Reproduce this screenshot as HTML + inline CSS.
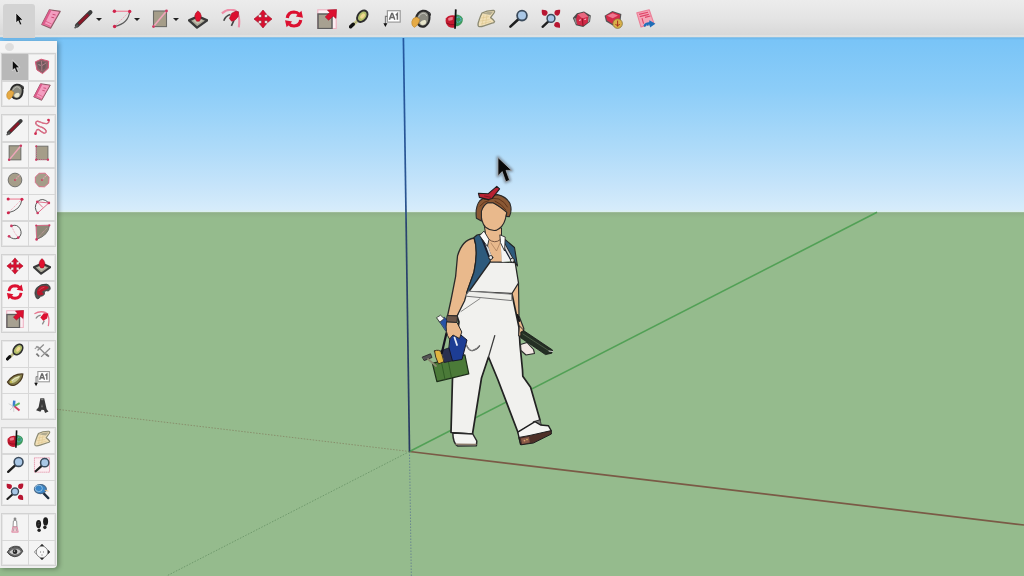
<!DOCTYPE html>
<html><head><meta charset="utf-8">
<style>
html,body{margin:0;padding:0;width:1024px;height:576px;overflow:hidden;font-family:"Liberation Sans",sans-serif;background:#95bb8d;}
.a{position:absolute;}
svg{position:absolute;overflow:visible;}
#sky{left:0;top:37px;width:1024px;height:175px;background:linear-gradient(#9ac8e4 0px,#70baee 1.5px,#79c4f7 3px,#8ccdf8 30%,#acdaf9 62%,#c6e4fa 85%,#d6ecfb 98.5%,#dcefef);}
#ground{left:0;top:212px;width:1024px;height:364px;background:linear-gradient(#a8c4a4 0px,#8fb088 1.2px,#92b58a 3px,#95bb8d 6px,#95bb8d);}
#tb{left:0;top:0;width:1024px;height:37px;background:linear-gradient(#ececec,#e4e4e4 50%,#d7d7d7);}
#tbl{left:0;top:34.5px;width:1024px;height:2.5px;background:#dfe1e1;}
#sel{left:3px;top:4px;width:32px;height:34px;background:#d3d3d3;border-radius:3px 3px 0 0;}
#pal{left:0;top:41px;width:56.5px;height:527px;background:#eeeeee;border-radius:0 0 4px 0;box-shadow:2px 1px 5px rgba(0,0,0,.32);}
#paltitle{left:0;top:41px;width:56.5px;height:11px;background:#f4f4f4;}
#palbtn{left:4.5px;top:43px;width:9px;height:8px;border-radius:50%;background:#dedede;}
.grp{position:absolute;left:1px;width:54.5px;box-sizing:border-box;border:1px solid #d2d2d2;background:#f4f4f4;box-shadow:inset 0 0 0 1px #e6e6e6;}
.vl{position:absolute;left:25.8px;top:0;bottom:0;width:1.6px;background:#d8d8d8;}
.hl{position:absolute;left:0;right:0;height:1.6px;background:#d8d8d8;}
.pc{position:absolute;left:0;width:26px;height:26px;}
.selc{position:absolute;background:#b8b8b8;}
.drop{position:absolute;top:17.5px;width:0;height:0;border-left:3px solid transparent;border-right:3px solid transparent;border-top:3px solid #222;}
</style></head><body>
<svg width="0" height="0" style="position:absolute"><defs>
<symbol id="i-select" viewBox="0 0 20 20"><path d="M7 4L7 13.8L9.2 11.8L11 16L12.8 15.3L11 11.2L13.9 10.9Z" fill="#0d0d0d" stroke="#fafafa" stroke-width="1" stroke-opacity=".55" stroke-linejoin="round"/></symbol>
<symbol id="i-eraser" viewBox="0 0 20 20"><path d="M8.4 0.8L19.2 2.4L9.6 19.2L0.8 15.4Z" fill="#ee7aa5" stroke="#8e5a66" stroke-width="1.1" stroke-linejoin="round"/><path d="M8.8 1.6L17.8 3L9.6 17L2.6 14.2Z" fill="#f39ec0"/><path d="M0.8 15.4L8.4 0.8L10.4 1.4L3 16.2Z" fill="#dc5a8a"/><path d="M3.4 14.6L9.2 17.4M5 12.4L10.6 15" stroke="#e0608c" stroke-width=".9"/><path d="M11.6 5.4L14.6 6M10.4 8.2L13.2 8.8" stroke="#c84a74" stroke-width="1"/></symbol>
<symbol id="i-pencil" viewBox="0 0 20 20"><path d="M3 16.5L16.4 3.3" stroke="#3c3c3c" stroke-width="4.2" stroke-linecap="round"/><path d="M4.8 14.8L14.2 5.5" stroke="#8a1828" stroke-width="2.8"/><path d="M1.2 18.6L3.4 16.4" stroke="#5a5a5a" stroke-width="1.8" stroke-linecap="round"/></symbol>
<symbol id="i-arc" viewBox="0 0 20 20"><path d="M2.5 2.3H17.7" stroke="#ef8ea2" stroke-width="1.4"/><path d="M17.5 2.6L2.7 17.3" stroke="#f0a8b8" stroke-width="1" stroke-dasharray="1.6 1"/><path d="M17.7 2.4Q16.5 14.5 2.6 17.5" stroke="#5c5c5c" stroke-width="1.1" fill="none"/><circle cx="2.4" cy="2.3" r="1.7" fill="#d0244c"/><circle cx="17.7" cy="2.4" r="1.7" fill="#d0244c"/><circle cx="2.6" cy="17.5" r="1.7" fill="#d0244c"/></symbol>
<symbol id="i-rect" viewBox="0 0 20 20"><rect x="3.5" y="2" width="13" height="15.6" fill="#a59d89" stroke="#6a6a66" stroke-width="1.1"/><path d="M3.5 17.6L16.5 2" stroke="#f0a6bb" stroke-width="1.6"/><circle cx="3.5" cy="17.6" r="1.4" fill="#cc3a62"/><circle cx="16.5" cy="2" r="1.4" fill="#cc3a62"/></symbol>
<symbol id="i-push" viewBox="0 0 20 20"><path d="M1 11.4L10 7.2L19.2 11.4L9 18.6Z" fill="#a9a798" stroke="#3a3a3a" stroke-width="2.3" stroke-linejoin="round"/><path d="M5 11.6L10 9.4L15 11.6L9.4 15Z" fill="#c6c4b2"/><path d="M10 1.8Q12.6 3.6 13.2 6.6Q13.4 9.6 11.4 12.2L8.6 12.2Q6.6 9.6 6.8 6.6Q7.4 3.6 10 1.8Z" fill="#e1112f" stroke="#8a0a1e" stroke-width=".5"/></symbol>
<symbol id="i-follow" viewBox="0 0 20 20"><path d="M0.9 4.4Q7.6 -1.4 14.6 1.8Q19.6 5.4 17.8 18.4" stroke="#ef8ca6" stroke-width="2.1" fill="none"/><path d="M2.8 11.8Q4.4 7 9.4 5.6" stroke="#454545" stroke-width="1.6" fill="none"/><path d="M12.8 11.6L10.4 16.8" stroke="#454545" stroke-width="1.6"/><path d="M8.4 9.4L10.8 4.2L15 2.2L17.6 2.8L17.2 7.6L14 11.2L10.6 12.2Z" fill="#dc0f30" stroke="#9b0c22" stroke-width=".6"/></symbol>
<symbol id="i-move" viewBox="0 0 20 20"><path d="M10 1L13.6 5.4L11.4 5.4L11.4 8.6L14.6 8.6L14.6 6.4L19 10L14.6 13.6L14.6 11.4L11.4 11.4L11.4 14.6L13.6 14.6L10 19L6.4 14.6L8.6 14.6L8.6 11.4L5.4 11.4L5.4 13.6L1 10L5.4 6.4L5.4 8.6L8.6 8.6L8.6 5.4L6.4 5.4Z" fill="#dc1030" stroke="#9a0a20" stroke-width=".6" stroke-linejoin="round"/></symbol>
<symbol id="i-rotate" viewBox="0 0 20 20"><path d="M3.3 9Q4 3.2 10 3Q13.2 3 14.8 5" stroke="#dc1030" stroke-width="3.2" fill="none"/><path d="M11.8 7.5L19 8.8L17.4 1.8Z" fill="#dc1030"/><path d="M16.7 11Q16 16.8 10 17Q6.8 17 5.2 15" stroke="#dc1030" stroke-width="3.2" fill="none"/><path d="M8.2 12.5L1 11.2L2.6 18.2Z" fill="#dc1030"/></symbol>
<symbol id="i-scale" viewBox="0 0 20 20"><rect x="0.8" y="0.8" width="18.4" height="18.8" fill="#fbeef2" stroke="#eeb0c0" stroke-width="1.1"/><rect x="1" y="5" width="14" height="14.6" fill="#a7a191" stroke="#5e5e5e" stroke-width="1.5"/><path d="M19.6 0.4L19 9.4L16.2 7.2L11.6 11.2L8.2 8L12.6 3.6L10.4 1Z" fill="#dc1030" stroke="#9b0c22" stroke-width=".5"/></symbol>
<symbol id="i-tape" viewBox="0 0 20 20"><path d="M3.6 16.4L9.6 10.6" stroke="#c9c88e" stroke-width="3.2"/><path d="M3.6 16.4L9.6 10.6" stroke="#555" stroke-width="0.6" stroke-dasharray="1 1"/><ellipse cx="13.3" cy="7.2" rx="4.4" ry="6.4" transform="rotate(38 13.3 7.2)" fill="#b3bf6a" stroke="#2e2e2e" stroke-width="1.9"/><ellipse cx="13.6" cy="7" rx="1.8" ry="3" transform="rotate(38 13.6 7)" fill="#f0d890"/><path d="M1.6 17.8L4.2 15.2" stroke="#111" stroke-width="3.4" stroke-linecap="round"/></symbol>
<symbol id="i-text" viewBox="0 0 20 20"><rect x="5.4" y="1.7" width="12.8" height="11.4" fill="#fff" stroke="#9a9a9a" stroke-width="1.2"/><path d="M7.4 10.8L9.7 4.4H10.5L12.8 10.8M8.4 8.6H11.8" stroke="#6a6a6a" stroke-width="1.5" fill="none"/><path d="M13.8 6.2L15.4 4.6V10.8" stroke="#6a6a6a" stroke-width="1.5" fill="none"/><path d="M5.4 7.4H3.4V15" stroke="#7a7a7a" stroke-width="1.1" fill="none"/><path d="M1.4 14.2L5.4 14.2L3.4 18Z" fill="#111"/></symbol>
<symbol id="i-paint" viewBox="0 0 20 20"><path d="M5 9Q6.6 2.8 11.6 1.8Q16.8 1.2 18.2 5.8Q19.6 13.2 14.4 17Q9.8 19.2 6.6 14.6Z" fill="#8a8a80" stroke="#2a2a2a" stroke-width="2"/><path d="M15.4 3.4Q19.6 2.4 19.4 6.6" stroke="#3a3a3a" stroke-width="1.3" fill="none"/><path d="M7.6 8Q9 4.8 12 4.2Q15 4 15.8 7" stroke="#c0c0b8" stroke-width="1" fill="none"/><path d="M9 13.4Q11 10.4 14.4 11Q16 12.6 14.6 15Q12 16.6 9.8 15.6Z" fill="#e8e6cc"/><path d="M0.8 12.6Q1.6 8.4 5.8 8L8.8 10.2Q7.8 16.4 3.2 18.4Q0.2 16.6 0.8 12.6Z" fill="#e6aa44" stroke="#b07a20" stroke-width=".5"/></symbol>
<symbol id="i-orbit" viewBox="0 0 20 20"><path d="M11 6.6Q5 5.4 1.8 9.6Q0.8 14.8 4.6 17.8Q8.4 19.8 11 18Z" fill="#c41a30"/><path d="M4 9.4Q6.4 7.8 9 8.2L8.6 11Q6 11.8 4.4 11.6Z" fill="#e87a88"/><path d="M2.4 14Q6 16.4 11 15.6" stroke="#8a1020" stroke-width="1" fill="none"/><path d="M11 5.6Q16.8 5.4 18.8 9.6Q19.4 15.4 13.6 17.2L11 17.2Z" fill="#3f9a5c"/><circle cx="14.4" cy="10.6" r="2.6" fill="none" stroke="#58b8e0" stroke-width="1.1" stroke-dasharray="1.2 .8"/><path d="M11.8 0.4L11 19.8" stroke="#111" stroke-width="1.8"/></symbol>
<symbol id="i-pan" viewBox="0 0 20 20"><path d="M6 4Q11 1.2 17.6 1.4Q19.2 2 18.2 3.6L14.6 8.6Q17.2 10.4 18.6 12.6Q18.2 14 16 14.2L8 16.8Q4 18.2 2.4 17.2Q1.4 15.8 2.8 12Q4.4 7 6 4Z" fill="#f1e0b8" stroke="#8c8a72" stroke-width="1.3" stroke-linejoin="round"/><path d="M6.4 4.6Q11.4 2.4 17.4 2.4L14.4 6Q10 5.6 6.4 4.6Z" fill="#b0aa90"/><path d="M5 9L13 7.6M4.2 12L13.6 10.6M5 15L15 12.4M8 5.6L6 15.6M11 6L9.6 15" stroke="#e0c890" stroke-width=".7"/></symbol>
<symbol id="i-zoom" viewBox="0 0 20 20"><path d="M2.4 17.6L10.4 10.2" stroke="#1e1e1e" stroke-width="2.6" stroke-linecap="round"/><circle cx="14" cy="6.6" r="4.9" fill="#a9c7e6" stroke="#3b4b5c" stroke-width="1.8"/></symbol>
<symbol id="i-zoomext" viewBox="0 0 20 20"><path d="M1.6 17.8L7.4 12.4" stroke="#1e1e1e" stroke-width="2.3" stroke-linecap="round"/><circle cx="10" cy="9.4" r="3.9" fill="#a9c7e6" stroke="#3b4b5c" stroke-width="1.5"/><path d="M0.8 0.8Q5.6 0.6 6.6 3Q7 5 5.2 6.4Q2.8 7.2 1.2 5.4Q0.4 3.4 0.8 0.8Z" fill="#b81632"/><path d="M19.2 0.8Q19.4 5.6 17 6.6Q15 7 13.6 5.2Q12.8 2.8 14.6 1.2Q16.6 0.4 19.2 0.8Z" fill="#b81632"/><path d="M19 18.8Q14.2 19 13.2 16.6Q12.8 14.6 14.6 13.2Q17 12.4 18.6 14.2Q19.4 16.2 19 18.8Z" fill="#b81632"/></symbol>
<symbol id="i-wh3d" viewBox="0 0 20 20"><path d="M0.8 9L5 4.2L12 2.4L18.8 6.4L18 12.8L11.2 18L4 16.2Z" fill="#4a4a4a"/><path d="M1.8 8.8L4.2 9.6L5 15.4L3.6 14.6Z" fill="#8a8a8a"/><path d="M16.4 7.4L18 7L17.4 12.6L15.8 13.6Z" fill="#9a9a9a"/><path d="M4.2 9.6L5.6 5.2L12 3.4L16.4 7.4L15.8 13.6L11 17L5 15.4Z" fill="#d02a48"/><path d="M5.6 5.2L12 3.4L16.4 7.4L10.4 9.4Z" fill="#e86880"/><path d="M10.4 9.4L11 17" stroke="#8a1020" stroke-width=".9"/><path d="M7 11.4L9 10.8M12.4 10.6L14.2 10" stroke="#f8d0d8" stroke-width="1"/></symbol>
<symbol id="i-extwh" viewBox="0 0 20 20"><path d="M0.6 6.8L8.4 2L17.4 5L16.4 12.6L8.8 16.6L2 12.4Z" fill="#555"/><path d="M1.8 6.8L8.6 3L16.2 5.8L15.4 11.8L8.8 15L3 11.4Z" fill="#d42a48"/><path d="M3 6.8L8.6 4.2L14 6.4L8.8 9.2Z" fill="#ef7890"/><circle cx="13.6" cy="14.6" r="4.8" fill="#d8b04a" stroke="#7a6a30" stroke-width=".7"/><path d="M13.6 11.6V17.6M11.4 15.4Q13.6 17.8 15.8 15.4" stroke="#a8301c" stroke-width="1" fill="none"/></symbol>
<symbol id="i-layout" viewBox="0 0 20 20"><path d="M0.8 3.9L13.2 0.8L17.9 14.4L5 18Z" fill="#f4a6b8" stroke="#ec8098" stroke-width="1.1" stroke-linejoin="round"/><path d="M3 5.4L12 3.2M3.8 7.6L12.8 5.4M6 9.2L7.6 14.6M9 8.4L14.4 7" stroke="#e04468" stroke-width="1.1"/><path d="M7.4 16.4Q9.4 13 13.2 13.2L13.4 11.2L19.4 14.8L14 18.6L13.8 16.4Q10.8 16 8.6 18Z" fill="#1e6eb8"/><path d="M10 16.4L11 16.2M12.4 16L13.4 16" stroke="#8ac0f0" stroke-width=".8"/></symbol>
<symbol id="i-lasso" viewBox="0 0 20 20"><path d="M2.6 5.4L9 2.4L17.4 4.6L17 12.6L10.6 18.4L4.4 14.4Z" fill="#8c626a" stroke="#d85878" stroke-width="1.1" stroke-linejoin="round"/><path d="M4.6 6.4L9.4 4.6L14.6 6.6L13.6 12.4L9.8 15.4L6.2 12.6Z" fill="#6e5a5e"/><path d="M9.4 4.6L9.8 9.6L14.6 6.6M9.8 9.6L9.8 15.4" stroke="#c88a98" stroke-width=".8" fill="none"/><path d="M6 8.4L8.6 9.4" stroke="#b0a0a4" stroke-width="1"/></symbol>
<symbol id="i-freehand" viewBox="0 0 20 20"><path d="M17.2 2.2Q19 4.6 15.4 6.2Q11.4 6.4 7.4 4.2Q3.4 2.6 3 5.6Q3.2 8 7.6 9.6Q13.2 11.2 14.6 14.4Q14.6 17.4 11.6 16.6Q8.4 14.8 6.2 12.8Q3.6 12.4 3.2 16.2L2.8 17.6" stroke="#c8405e" stroke-width="1.5" fill="none"/><path d="M17.2 2.2Q19 4.6 15.4 6.2Q11.4 6.4 7.4 4.2Q3.4 2.6 3 5.6Q3.2 8 7.6 9.6Q13.2 11.2 14.6 14.4Q14.6 17.4 11.6 16.6Q8.4 14.8 6.2 12.8Q3.6 12.4 3.2 16.2" stroke="#f0b0c0" stroke-width=".5" fill="none"/><circle cx="17.2" cy="2.2" r="1.5" fill="#d02a50"/><circle cx="2.8" cy="17.4" r="1.5" fill="#d02a50"/></symbol>
<symbol id="i-rotrect" viewBox="0 0 20 20"><rect x="3.6" y="2.4" width="13" height="15" fill="#a59d89" stroke="#6a6a66" stroke-width="1"/><path d="M3.6 2.4V17.4H16.6" stroke="#e27c96" stroke-width="1" stroke-dasharray="1.4 1" fill="none"/><circle cx="3.6" cy="17.4" r="1.3" fill="#cc3a62"/><circle cx="16.6" cy="17.4" r="1.3" fill="#cc3a62"/><circle cx="3.6" cy="2.4" r="1.1" fill="#cc3a62"/></symbol>
<symbol id="i-circle" viewBox="0 0 20 20"><circle cx="10" cy="10" r="7.6" fill="#a59d89" stroke="#6a6a66" stroke-width="1"/><path d="M10 10L15.2 4.6" stroke="#eaa0b4" stroke-width="1.2" stroke-dasharray="1.4 .8"/><circle cx="10" cy="10" r="1" fill="#cc3a62"/></symbol>
<symbol id="i-polygon" viewBox="0 0 20 20"><path d="M6.8 2.6L13.6 2.4L17.8 7L17.4 13.6L12.8 17.6L6.6 17.4L2.6 12.8L2.6 6.6Z" fill="#a59d89" stroke="#d86a86" stroke-width="1"/><path d="M10 10L16 3.8" stroke="#eaa0b4" stroke-width="1.2" stroke-dasharray="1.4 .8"/><circle cx="10" cy="10" r="1" fill="#cc3a62"/></symbol>
<symbol id="i-arc3" viewBox="0 0 20 20"><path d="M4.8 5.4Q10.6 -0.4 17.6 6.6" stroke="#555" stroke-width="1.1" fill="none"/><path d="M4.8 5.4Q0.2 11.6 5.2 17.8" stroke="#555" stroke-width="1.1" fill="none"/><path d="M4.8 5.4L17.6 6.6L5.2 17.8M4.8 5.4L11 11.6" stroke="#e0708c" stroke-width="1.1" fill="none"/><circle cx="4.8" cy="5.4" r="1.5" fill="#cc3a62"/><circle cx="17.6" cy="6.6" r="1.5" fill="#cc3a62"/><circle cx="5.2" cy="17.8" r="1.5" fill="#cc3a62"/></symbol>
<symbol id="i-arcc" viewBox="0 0 20 20"><path d="M6 3.2Q12.4 0.8 15.6 6.4Q18.8 12.6 13.6 16.6Q8.6 19.2 3.4 14.8" stroke="#555" stroke-width="1.1" fill="none"/><path d="M6 3.2L9.4 10.4L13.6 16.2" stroke="#eaa0b4" stroke-width="1" stroke-dasharray="1.2 .8" fill="none"/><circle cx="6" cy="3.2" r="1.5" fill="#cc3a62"/><circle cx="3.4" cy="14.8" r="1.5" fill="#cc3a62"/><circle cx="13.6" cy="16.2" r="1.5" fill="#cc3a62"/></symbol>
<symbol id="i-pie" viewBox="0 0 20 20"><path d="M3.6 2.8L18.2 2.6Q17.6 13.4 4 18.2Z" fill="#8f8878" stroke="#6a6a66" stroke-width="1"/><path d="M3.6 2.8L18.2 2.6M3.6 2.8L4 18.2" stroke="#e0708c" stroke-width="1" fill="none"/><path d="M3.6 18.4L15 6" stroke="#d8a0b0" stroke-width="1" stroke-dasharray="1 1"/><circle cx="3.6" cy="2.8" r="1.2" fill="#cc3a62"/><circle cx="18.2" cy="2.6" r="1.2" fill="#cc3a62"/><circle cx="4" cy="18.2" r="1.4" fill="#cc3a62"/></symbol>
<symbol id="i-offset" viewBox="0 0 20 20"><path d="M1.6 4.2Q8 0.4 14.4 3Q19.2 6.4 17 18" stroke="#e87890" stroke-width="1.4" fill="none"/><path d="M3.2 9.4Q5 6 8.6 5.6" stroke="#8a8a8a" stroke-width="1.4" fill="none"/><path d="M12.6 11.8L10.4 16" stroke="#8a8a8a" stroke-width="1.4"/><path d="M8.2 8.2L12 3.6L17 4L15.6 9.4L11.4 12Z" fill="#dc1030"/></symbol>
<symbol id="i-dim" viewBox="0 0 20 20"><path d="M5 8.4L12 1.6M9 15.4L19 5.8M5.6 4.2L15.6 14.2" stroke="#8e8e8e" stroke-width="1.4" fill="none"/><path d="M2 6.6L5.4 3.6M3.4 3.4L6.4 6" stroke="#999" stroke-width="1.2"/><path d="M14.6 12L17.6 15.2" stroke="#777" stroke-width="2"/><path d="M3.8 11.8L6.8 15" stroke="#777" stroke-width="2"/></symbol>
<symbol id="i-prot" viewBox="0 0 20 20"><path d="M1.6 13.4Q8 4 18.8 4.4Q18 13 9.6 16.8Q4.4 18.4 1.6 13.4Z" fill="#857f4a" stroke="#4a3a20" stroke-width="1.3"/><path d="M4.4 13Q9 7.2 16 6.4Q14 11.6 9.2 14Q6 15.2 4.4 13Z" fill="#c8c890"/><path d="M6 12.4Q10 8.6 14.6 7.4" stroke="#f0f0d0" stroke-width="1" fill="none"/><circle cx="5.6" cy="13.2" r="1.2" fill="#c8c050"/></symbol>
<symbol id="i-axes" viewBox="0 0 20 20"><path d="M9.2 5.2L8.6 12" stroke="#3a7ed0" stroke-width="2.8"/><path d="M9.6 11L15.2 8" stroke="#60b860" stroke-width="2.2"/><path d="M9.6 11.6L15 16" stroke="#d04060" stroke-width="2.2"/><path d="M8.6 11.6L3 8.6M8.6 11.6L4.4 15.6M8.6 12L8.6 17.6" stroke="#c8c8c8" stroke-width=".9"/></symbol>
<symbol id="i-text3d" viewBox="0 0 20 20"><path d="M8.2 2.6L12.4 2.4L15.2 14.8L17.2 17.2L13.4 18.8L12.2 15.6L9.6 15.4L8.2 17.6L3.4 15.8L6.2 12.6Z" fill="#3a3a3a"/><path d="M8.2 2.6L12.4 2.4L11 4.8L9.4 4.8Z" fill="#777"/><path d="M10 9L10.8 12.6L9.2 12.6Z" fill="#888"/></symbol>
<symbol id="i-zoomwin" viewBox="0 0 20 20"><rect x="1.6" y="2" width="16.8" height="16" fill="#fbeef2" stroke="#e07c96" stroke-width="1" stroke-dasharray="1.2 1"/><path d="M3 17L9.6 11" stroke="#1e1e1e" stroke-width="2.4" stroke-linecap="round"/><circle cx="13" cy="7.4" r="4.6" fill="#a9c7e6" stroke="#3b4b5c" stroke-width="1.7"/></symbol>
<symbol id="i-prev" viewBox="0 0 20 20"><path d="M11.6 11.2L17 16.8" stroke="#1e2e3e" stroke-width="2.6" stroke-linecap="round"/><ellipse cx="8.2" cy="6.8" rx="6.6" ry="5" fill="#3a86c8" stroke="#4a6a8a" stroke-width="1.4"/><ellipse cx="6.4" cy="6" rx="4" ry="3.6" fill="none" stroke="#9ac4e4" stroke-width="1"/><path d="M13 8L17.2 9" stroke="#f0c080" stroke-width="1"/></symbol>
<symbol id="i-poscam" viewBox="0 0 20 20"><circle cx="10" cy="3.2" r="1.6" fill="#888"/><path d="M8.2 5.4Q10 4.4 11.8 5.4L12.2 12.2L7.8 12.2Z" fill="#fff" stroke="#8a8a8a" stroke-width="1"/><path d="M7.6 12.2L12.4 12.2L13.6 18L6.4 18Z" fill="#f4c8d2" stroke="#d87090" stroke-width=".8"/><path d="M9 13L8 17M11 13L12 17" stroke="#999" stroke-width=".8"/></symbol>
<symbol id="i-walk" viewBox="0 0 20 20"><ellipse cx="6.2" cy="9" rx="2.8" ry="4.6" fill="#1e1e1e"/><ellipse cx="6.8" cy="15.8" rx="1.9" ry="2" fill="#222"/><ellipse cx="14" cy="6" rx="2.8" ry="4.6" fill="#1e1e1e"/><ellipse cx="13.2" cy="12.6" rx="1.9" ry="2" fill="#222"/><path d="M5.4 7.6L7 7.2M5 10L7.4 9.6" stroke="#777" stroke-width=".5"/></symbol>
<symbol id="i-look" viewBox="0 0 20 20"><path d="M1.4 10.2Q6 3.2 12.6 4.2Q17.6 5 18.6 9.2Q15.2 15.4 9.2 15.2Q3.8 14.2 1.4 10.2Z" fill="#6a6a6a" stroke="#3a3a3a" stroke-width="1"/><path d="M3.4 10Q7.4 6.2 12 6.8Q15.8 7.6 16.4 9.6Q13.6 13 9.6 13Q5.6 12.6 3.4 10Z" fill="#cfcfcf"/><circle cx="10" cy="9.6" r="2.6" fill="#2a2a2a"/><circle cx="9.4" cy="9" r=".8" fill="#ddd"/><path d="M3 6.6Q9 1.8 15.8 4.6" stroke="#444" stroke-width="1" fill="none"/></symbol>
<symbol id="i-section" viewBox="0 0 20 20"><path d="M10 1.6L18.6 10L10 18.4L1.4 10Z" fill="none" stroke="#777" stroke-width=".9"/><path d="M10 1L12.4 3.6L7.6 3.6ZM19 10L16.4 12.4L16.4 7.6ZM10 19L7.6 16.4L12.4 16.4Z" fill="#1e1e1e"/><circle cx="10" cy="10" r="6.4" fill="#f8f8f8" stroke="#8a8a8a" stroke-width="1.1"/><path d="M8.4 9L8.4 11M11.6 9L11.6 11M9 13.4L11 13.4" stroke="#999" stroke-width=".9"/></symbol>
<symbol id="i-followp" viewBox="0 0 20 20"><path d="M3.6 16.6Q0.4 10.6 4 5.4Q8.6 0.6 15 1.2Q19.4 2.4 19.2 6.8L17.2 9Q14.4 7.6 12.6 10Q13.6 12.8 11.4 14Q8 14.6 7 16.6Q5.4 18.6 3.6 16.6Z" fill="#505050" stroke="#2a2a2a" stroke-width=".7"/><path d="M4.4 11.6Q4.2 6 8.6 3.6Q13 2 17.6 4.4Q17 7 14 7.4Q11 8 9.6 10.4Q12 11 11.6 12.8Q8.6 14 6 14Z" fill="#b8182c"/><path d="M6.6 8.6Q8.6 5.2 12.6 4.8" stroke="#e05060" stroke-width=".8" fill="none"/></symbol>
</defs></svg>
<div id="sky" class="a"></div><div id="ground" class="a"></div>
<svg width="1024" height="576" style="left:0;top:0">
<defs><linearGradient id="bg" gradientUnits="userSpaceOnUse" x1="0" y1="38" x2="0" y2="451"><stop offset="0" stop-color="#2458a0"/><stop offset=".4" stop-color="#2a5490"/><stop offset=".45" stop-color="#2a4470"/><stop offset="1" stop-color="#283a60"/></linearGradient></defs>
<line x1="409.5" y1="451.5" x2="57" y2="409.3" stroke="#7d6a50" stroke-width="1" stroke-dasharray="1.5 1.5" opacity=".55"/>
<line x1="409.5" y1="451.5" x2="166.5" y2="576" stroke="#5f8a5e" stroke-width="1" stroke-dasharray="1.5 1.5" opacity=".7"/>
<line x1="409.5" y1="451.5" x2="411.3" y2="576" stroke="#56708f" stroke-width="1" stroke-dasharray="1.5 1.5" opacity=".7"/>
<line x1="409.5" y1="451.5" x2="1024" y2="525" stroke="#7a5a46" stroke-width="1.7"/>
<line x1="409.5" y1="451.5" x2="877" y2="212.3" stroke="#52a056" stroke-width="1.6"/>
<line x1="403.4" y1="38" x2="409.5" y2="451.5" stroke="url(#bg)" stroke-width="1.7"/>
</svg>
<svg width="1024" height="576" style="left:0;top:0">
<g stroke-linejoin="round" stroke-linecap="round">
<!-- right arm (her left) -->
<path d="M510 284 L518.5 283 L519 316 L523.8 328.5 L523 336 L518 335 L516 318 L511 295 Z" fill="#e9b98c" stroke="#2a2a2a" stroke-width="1.2"/>
<!-- pants -->
<path d="M467 292 L461 300 L457 316 L459 322 L455 350 L452.5 378 L451 432.5 L472.5 434 L481.5 378 L488.5 357 L498 380 L518 432.5 L540 420 L530.6 387.2 L522.8 376.2 L522.5 370 L520 344.7 L519 327.3 L516.4 315 L512 294 Z" fill="#f1f1ee" stroke="#222" stroke-width="1.7"/>
<path d="M494.8 335.5 L488.5 357" stroke="#3a3a3a" stroke-width="1.2" fill="none"/>
<path d="M461 311.5 L480 298.6" stroke="#8a8a88" stroke-width="1" fill="none"/>
<!-- left arm -->
<path d="M474 238 Q462 240 457.5 256 L455.6 276.6 L451 300 L447.5 316 L457 316 L464.5 301 L468 289 L474 272 Q478.5 250 474 238 Z" fill="#e9b98c" stroke="#2a2a2a" stroke-width="1.3"/>
<!-- vest left -->
<path d="M474 237.5 Q478.5 250 474 272 L466.5 293 L472 293 L491.5 261 L482.5 233.8 L477 235 Z" fill="#2e5a7c" stroke="#222" stroke-width="1.1"/>
<!-- vest right -->
<path d="M502 236.8 L514.5 247.5 L517.5 266 L515.5 263.5 L503.5 241.5 Z" fill="#2e5a7c" stroke="#222" stroke-width="1.1"/>
<!-- bib -->
<path d="M490.5 261.5 L515.2 262.5 L518.5 283 L512 293.5 L469 291.5 Z" fill="#f1f1ee" stroke="#262626" stroke-width="1.3"/>
<!-- waistband -->
<path d="M469 291.2 L511.8 294.2 L511.8 300.6 L466 296.2 Z" fill="#eeeeea" stroke="#777" stroke-width="1"/>
<!-- neck & chest -->
<path d="M484.6 225 L501.5 228 L501.5 242 L502.5 262 L490.5 262 L486.5 240 Z" fill="#e9b98c" stroke="#2a2a2a" stroke-width="1"/>
<path d="M488.5 239 Q494.5 244.5 500.5 239.5" stroke="#6a4a38" stroke-width=".9" fill="none"/>
<path d="M491 243 L496.5 251 L500 243" stroke="#9a7050" stroke-width=".6" fill="none"/>
<path d="M500.5 241 L503.5 243.5 L512.5 261 L501.8 262 Z" fill="#f4f4f4"/>
<!-- straps -->
<path d="M482.5 237.5 L490.5 258" stroke="#1a2030" stroke-width="3.6"/>
<path d="M483.8 237.5 L491.2 257.5" stroke="#d9d9d9" stroke-width="1.8"/>
<path d="M503 244 L512.2 260.5" stroke="#1a2030" stroke-width="3.2"/>
<path d="M503.6 244 L512.4 260" stroke="#d9d9d9" stroke-width="1.6"/>
<circle cx="490.8" cy="257.5" r="2" fill="#e4e4e4" stroke="#222" stroke-width=".9"/>
<circle cx="512.4" cy="260.2" r="2" fill="#e4e4e4" stroke="#222" stroke-width=".9"/>
<!-- collar -->
<path d="M479.8 235.5 L484 231 L489 239.5 L487.5 246 Z" fill="#fafafa" stroke="#2a2a2a" stroke-width=".9"/>
<path d="M500.2 235 L505.2 237 L504.6 251 L500.6 243 Z" fill="#fafafa" stroke="#2a2a2a" stroke-width=".9"/>
<!-- face -->
<path d="M481.2 211 Q480.6 222 485.6 227.2 Q490.6 231.2 496 230.4 Q503 227.6 505.4 219 L506.8 212 Q499 205.6 493 202.6 L487.4 202.6 Q482.6 205.4 481.2 211 Z" fill="#e9b98c" stroke="#2a2a2a" stroke-width="1.1"/>
<!-- hair -->
<path d="M476.4 218.2 Q475 207 479.6 201 Q486.6 194.6 497.4 194.6 Q506.6 196.6 510 203.6 Q512.4 210.4 509.4 216.6 L506.2 216.4 L506.8 212.4 Q499 205.8 493 202.8 L487.6 202.8 Q483 205.6 481.4 211.4 L481.4 221 Z" fill="#8a5834" stroke="#2a2a2a" stroke-width="1.1"/>
<path d="M484 199.5 Q492 197 499 199 Q505 202 507.5 207 M480 206 Q484 201 489 200.5 M495 201 Q502 204 506 210" stroke="#5a3018" stroke-width=".9" fill="none"/>
<!-- bandana -->
<path d="M478.4 193.2 L488 193.8 L496.8 186.4 L499.6 188.8 L492.2 198.4 L488.4 199.6 L479.4 197.4 Z" fill="#b82232" stroke="#1e1e1e" stroke-width="1.1"/>
<path d="M484.5 196 L490.5 197.2" stroke="#7a1020" stroke-width=".8"/>
<!-- right hand tools: pliers & rag -->
<path d="M519.5 326 L523.5 330 L523.5 336 L519 336 Z" fill="#e9b98c" stroke="#2a2a2a" stroke-width="1"/>
<path d="M517.5 315 L519.2 321" stroke="#1a1a1a" stroke-width="2.2"/>
<path d="M520.5 344.5 L527 342.5 L533.5 349.5 L534.5 353.5 L526 355 L521 350.5 Z" fill="#f2e8e4" stroke="#2a2a2a" stroke-width="1.1"/>
<path d="M521 332 L523.5 330.5 L552.5 350 L551.8 353.2 L545.5 354.6 L521 338 Z" fill="#243024" stroke="#151515" stroke-width=".8"/>
<path d="M523 334 L550 351.5" stroke="#6a7a60" stroke-width=".6"/>
<path d="M549 351 L552.5 351.5" stroke="#d0d0d0" stroke-width="1"/>
<!-- left hand & wristband -->
<path d="M447.5 315.5 L457.5 316 L457 322.5 L446.5 322 Z" fill="#6b5548" stroke="#2a2a2a" stroke-width="1"/>
<!-- tool bag -->
<path d="M432.4 363.4 L464.9 354.9 L468.8 373.8 L436.9 381.6 Z" fill="#4b7a38" stroke="#1e2e1a" stroke-width="1.2"/>
<path d="M448 359.5 L451.5 378 M441.5 362.5 L445 379.5" stroke="#2e5a22" stroke-width=".9"/>
<!-- hammer & tools sticking out -->
<path d="M422.5 357 L430.5 353.8 L432 357.5 L424.5 360.5 Z" fill="#555" stroke="#222" stroke-width=".8"/>
<path d="M428 359 L436 366" stroke="#8a8a70" stroke-width="1.8"/>
<path d="M434.5 351 Q438.5 348.5 442.5 353 L445.5 361 L438.5 364 Q435 357 434.5 351 Z" fill="#e0b440" stroke="#3a3020" stroke-width="1"/>
<!-- caulk gun -->
<path d="M441.2 350.5 L451.5 347 L453.8 360.5 L444.5 362.5 Z" fill="#2a3050" stroke="#1a1a2a" stroke-width=".8"/>
<path d="M446.5 333 L441.8 353" stroke="#15151f" stroke-width="2.2"/>
<path d="M450.5 335.5 L458.5 333 L467 340 L462 359.5 L452.5 361 L449 348 Z" fill="#1d3d94" stroke="#15152a" stroke-width="1"/>
<path d="M454.5 337.5 L457 345" stroke="#e8ecf4" stroke-width="1.8"/>
<path d="M466.5 345.2 Q469 351 472.5 350.6 Q477 349.5 479.5 345.8" stroke="#3a3a3a" stroke-width="1.3" fill="none"/>
<path d="M466.5 345.2 Q469 351 472.5 350.6 Q477 349.5 479.5 345.8" stroke="#d0d0d0" stroke-width=".5" fill="none"/>
<!-- tube -->
<path d="M439.2 320.5 L444.5 317.2 L451 327 L446.5 331.5 Z" fill="#2552a8" stroke="#1a2a5a" stroke-width=".8"/>
<path d="M436.8 317.5 L440.5 315.2 L444.2 318.6 L440 322 Z" fill="#f6f6f6" stroke="#333" stroke-width=".8"/>
<!-- hand over caulk gun -->
<path d="M446.5 322 L457 322.5 L461.8 332 L459.5 338.5 L453 335 L449.5 339 Q445 333 446.5 322 Z" fill="#e9b98c" stroke="#2a2a2a" stroke-width="1"/>
<!-- shoes -->
<path d="M452.8 433 L472.8 434 L476.8 441 L476.4 445.8 L457.5 446 Q453 443 452.8 433 Z" fill="#f4f4f2" stroke="#2a2a2a" stroke-width="1.5"/>
<path d="M456 444.3 L475.8 444.5" stroke="#8a7a6a" stroke-width="1.6"/>
<path d="M533.5 421.6 L540 419.8 L541.5 425.6 L536 426.5 Z" fill="#7a7a78" stroke="#2a2a2a" stroke-width=".8"/>
<path d="M517.8 432.2 L535 421.6 L540.5 425 L548.5 425.8 L551.4 431 L533 441.2 L520.5 444.2 Z" fill="#f4f4f2" stroke="#1f1f1f" stroke-width="1.4"/>
<path d="M519.2 437.4 L530 435.4 L551.2 430.6 L551.4 434 L533.4 443 L521.2 444.8 Z" fill="#4e3028" stroke="#1f1f1f" stroke-width="1"/>
<path d="M521 438.4 L529 437 L529.8 442.6 L522 444 Z" fill="#8a5a48"/>
<circle cx="524.5" cy="440.6" r=".9" fill="#e0a070"/><circle cx="527" cy="439.6" r=".8" fill="#d8b060"/>
</g>

</svg>
<div id="tb" class="a"></div><div id="tbl" class="a"></div><div id="sel" class="a"></div>
<svg style="left:8.5px;top:9px" width="20" height="20" viewBox="0 0 20 20" preserveAspectRatio="none"><use href="#i-select"/></svg>
<svg style="left:41px;top:9px" width="20" height="20" viewBox="0 0 20 20" preserveAspectRatio="none"><use href="#i-eraser"/></svg>
<svg style="left:73.5px;top:9px" width="20" height="20" viewBox="0 0 20 20" preserveAspectRatio="none"><use href="#i-pencil"/></svg>
<svg style="left:111.7px;top:9px" width="20" height="20" viewBox="0 0 20 20" preserveAspectRatio="none"><use href="#i-arc"/></svg>
<svg style="left:150px;top:9px" width="20" height="20" viewBox="0 0 20 20" preserveAspectRatio="none"><use href="#i-rect"/></svg>
<svg style="left:188px;top:9px" width="20" height="20" viewBox="0 0 20 20" preserveAspectRatio="none"><use href="#i-push"/></svg>
<svg style="left:220.5px;top:9px" width="20" height="20" viewBox="0 0 20 20" preserveAspectRatio="none"><use href="#i-follow"/></svg>
<svg style="left:252.5px;top:9px" width="20" height="20" viewBox="0 0 20 20" preserveAspectRatio="none"><use href="#i-move"/></svg>
<svg style="left:284.4px;top:9px" width="20" height="20" viewBox="0 0 20 20" preserveAspectRatio="none"><use href="#i-rotate"/></svg>
<svg style="left:317px;top:9px" width="20" height="20" viewBox="0 0 20 20" preserveAspectRatio="none"><use href="#i-scale"/></svg>
<svg style="left:348.7px;top:9px" width="20" height="20" viewBox="0 0 20 20" preserveAspectRatio="none"><use href="#i-tape"/></svg>
<svg style="left:381.6px;top:9px" width="20" height="20" viewBox="0 0 20 20" preserveAspectRatio="none"><use href="#i-text"/></svg>
<svg style="left:410.6px;top:9px" width="20" height="20" viewBox="0 0 20 20" preserveAspectRatio="none"><use href="#i-paint"/></svg>
<svg style="left:444.2px;top:9px" width="20" height="20" viewBox="0 0 20 20" preserveAspectRatio="none"><use href="#i-orbit"/></svg>
<svg style="left:476.3px;top:9px" width="20" height="20" viewBox="0 0 20 20" preserveAspectRatio="none"><use href="#i-pan"/></svg>
<svg style="left:508.3px;top:9px" width="20" height="20" viewBox="0 0 20 20" preserveAspectRatio="none"><use href="#i-zoom"/></svg>
<svg style="left:541px;top:9px" width="20" height="20" viewBox="0 0 20 20" preserveAspectRatio="none"><use href="#i-zoomext"/></svg>
<svg style="left:572.3px;top:9px" width="20" height="20" viewBox="0 0 20 20" preserveAspectRatio="none"><use href="#i-wh3d"/></svg>
<svg style="left:604.2px;top:9px" width="20" height="20" viewBox="0 0 20 20" preserveAspectRatio="none"><use href="#i-extwh"/></svg>
<svg style="left:636.4px;top:9px" width="20" height="20" viewBox="0 0 20 20" preserveAspectRatio="none"><use href="#i-layout"/></svg>
<div class="drop" style="left:96px"></div>
<div class="drop" style="left:134.4px"></div>
<div class="drop" style="left:172.9px"></div>
<div id="pal" class="a"></div><div id="paltitle" class="a"></div><div id="palbtn" class="a"></div>
<div class="grp" style="top:53.2px;height:53.6px"><div class="vl"></div><div class="hl" style="top:25.8px"></div></div>
<div class="selc" style="left:2px;top:54.2px;width:26px;height:26.3px"></div><svg style="left:4.90px;top:55.55px" width="21" height="21" viewBox="0 0 20 20"><use href="#i-select"/></svg><svg style="left:32.70px;top:56.85px" width="18" height="18" viewBox="0 0 20 20"><use href="#i-lasso"/></svg>
<svg style="left:6.10px;top:83.15px" width="18" height="18" viewBox="0 0 20 20"><use href="#i-paint"/></svg><svg style="left:32.70px;top:83.15px" width="18" height="18" viewBox="0 0 20 20"><use href="#i-eraser"/></svg>
<div class="grp" style="top:114.4px;height:132.5px"><div class="vl"></div><div class="hl" style="top:25.8px"></div><div class="hl" style="top:52.1px"></div><div class="hl" style="top:78.4px"></div><div class="hl" style="top:104.7px"></div></div>
<svg style="left:6.10px;top:118.05px" width="18" height="18" viewBox="0 0 20 20"><use href="#i-pencil"/></svg><svg style="left:32.70px;top:118.05px" width="18" height="18" viewBox="0 0 20 20"><use href="#i-freehand"/></svg>
<svg style="left:6.10px;top:144.35px" width="18" height="18" viewBox="0 0 20 20"><use href="#i-rect"/></svg><svg style="left:32.70px;top:144.35px" width="18" height="18" viewBox="0 0 20 20"><use href="#i-rotrect"/></svg>
<svg style="left:6.10px;top:170.65px" width="18" height="18" viewBox="0 0 20 20"><use href="#i-circle"/></svg><svg style="left:32.70px;top:170.65px" width="18" height="18" viewBox="0 0 20 20"><use href="#i-polygon"/></svg>
<svg style="left:6.10px;top:196.95px" width="18" height="18" viewBox="0 0 20 20"><use href="#i-arc"/></svg><svg style="left:32.70px;top:196.95px" width="18" height="18" viewBox="0 0 20 20"><use href="#i-arc3"/></svg>
<svg style="left:6.10px;top:223.25px" width="18" height="18" viewBox="0 0 20 20"><use href="#i-arcc"/></svg><svg style="left:32.70px;top:223.25px" width="18" height="18" viewBox="0 0 20 20"><use href="#i-pie"/></svg>
<div class="grp" style="top:253.5px;height:79.9px"><div class="vl"></div><div class="hl" style="top:25.8px"></div><div class="hl" style="top:52.1px"></div></div>
<svg style="left:6.10px;top:257.15px" width="18" height="18" viewBox="0 0 20 20"><use href="#i-move"/></svg><svg style="left:32.70px;top:257.15px" width="18" height="18" viewBox="0 0 20 20"><use href="#i-push"/></svg>
<svg style="left:6.10px;top:283.45px" width="18" height="18" viewBox="0 0 20 20"><use href="#i-rotate"/></svg><svg style="left:32.70px;top:283.45px" width="18" height="18" viewBox="0 0 20 20"><use href="#i-followp"/></svg>
<svg style="left:6.10px;top:309.75px" width="18" height="18" viewBox="0 0 20 20"><use href="#i-scale"/></svg><svg style="left:32.70px;top:309.75px" width="18" height="18" viewBox="0 0 20 20"><use href="#i-offset"/></svg>
<div class="grp" style="top:339.8px;height:79.9px"><div class="vl"></div><div class="hl" style="top:25.8px"></div><div class="hl" style="top:52.1px"></div></div>
<svg style="left:6.10px;top:343.45px" width="18" height="18" viewBox="0 0 20 20"><use href="#i-tape"/></svg><svg style="left:32.70px;top:343.45px" width="18" height="18" viewBox="0 0 20 20"><use href="#i-dim"/></svg>
<svg style="left:6.10px;top:369.75px" width="18" height="18" viewBox="0 0 20 20"><use href="#i-prot"/></svg><svg style="left:32.70px;top:369.75px" width="18" height="18" viewBox="0 0 20 20"><use href="#i-text"/></svg>
<svg style="left:6.10px;top:396.05px" width="18" height="18" viewBox="0 0 20 20"><use href="#i-axes"/></svg><svg style="left:32.70px;top:396.05px" width="18" height="18" viewBox="0 0 20 20"><use href="#i-text3d"/></svg>
<div class="grp" style="top:426.5px;height:79.9px"><div class="vl"></div><div class="hl" style="top:25.8px"></div><div class="hl" style="top:52.1px"></div></div>
<svg style="left:6.10px;top:430.15px" width="18" height="18" viewBox="0 0 20 20"><use href="#i-orbit"/></svg><svg style="left:32.70px;top:430.15px" width="18" height="18" viewBox="0 0 20 20"><use href="#i-pan"/></svg>
<svg style="left:6.10px;top:456.45px" width="18" height="18" viewBox="0 0 20 20"><use href="#i-zoom"/></svg><svg style="left:32.70px;top:456.45px" width="18" height="18" viewBox="0 0 20 20"><use href="#i-zoomwin"/></svg>
<svg style="left:6.10px;top:482.75px" width="18" height="18" viewBox="0 0 20 20"><use href="#i-zoomext"/></svg><svg style="left:32.70px;top:482.75px" width="18" height="18" viewBox="0 0 20 20"><use href="#i-prev"/></svg>
<div class="grp" style="top:512.8px;height:53.6px"><div class="vl"></div><div class="hl" style="top:25.8px"></div></div>
<svg style="left:6.10px;top:516.45px" width="18" height="18" viewBox="0 0 20 20"><use href="#i-poscam"/></svg><svg style="left:32.70px;top:516.45px" width="18" height="18" viewBox="0 0 20 20"><use href="#i-walk"/></svg>
<svg style="left:6.10px;top:542.75px" width="18" height="18" viewBox="0 0 20 20"><use href="#i-look"/></svg><svg style="left:32.70px;top:542.75px" width="18" height="18" viewBox="0 0 20 20"><use href="#i-section"/></svg>
<svg style="left:0;top:0" width="1024" height="576"><defs><filter id="cblur" x="-50%" y="-50%" width="200%" height="200%"><feGaussianBlur stdDeviation="1.2"/></filter></defs><path d="M498 157.5 L498 175.8 L502.2 171.6 L505.8 181.8 L509.6 180.2 L506 170.4 L511.6 170.4 Z" fill="none" stroke="#606870" stroke-opacity=".55" stroke-width="3.4" stroke-linejoin="round" filter="url(#cblur)"/><path d="M498 157.5 L498 175.8 L502.2 171.6 L505.8 181.8 L509.6 180.2 L506 170.4 L511.6 170.4 Z" fill="#0a0a0a" stroke="#b0b4b8" stroke-opacity=".7" stroke-width="1" stroke-linejoin="round"/></svg>
</body></html>
